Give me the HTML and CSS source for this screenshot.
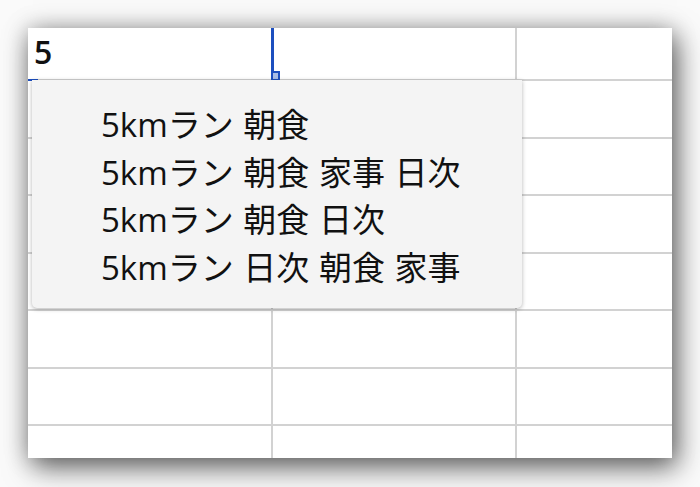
FILE: index.html
```html
<!DOCTYPE html>
<html lang="ja">
<head>
<meta charset="utf-8">
<link rel="stylesheet" href="styles.css">
</head>
<body>
<div class="sheet">
  <div class="grid">
    <div class="cell active-cell">5</div><div class="cell"></div><div class="cell"></div>
    <div class="cell"></div><div class="cell"></div><div class="cell"></div>
    <div class="cell"></div><div class="cell"></div><div class="cell"></div>
    <div class="cell"></div><div class="cell"></div><div class="cell"></div>
    <div class="cell"></div><div class="cell"></div><div class="cell"></div>
    <div class="cell"></div><div class="cell"></div><div class="cell"></div>
    <div class="cell"></div><div class="cell"></div><div class="cell"></div>
    <div class="cell"></div><div class="cell"></div><div class="cell"></div>
  </div>
  <div class="sel-right"></div>
  <div class="sel-handle"></div>
  <div class="sel-left"></div>
  <ul class="dropdown">
    <li>5kmラン 朝食</li>
    <li>5kmラン 朝食 家事 日次</li>
    <li>5kmラン 朝食 日次</li>
    <li>5kmラン 日次 朝食 家事</li>
  </ul>
</div>
</body>
</html>
```
FILE: styles.css
```css
html, body {
  margin: 0;
  padding: 0;
}
body {
  background: #fafafa;
  width: 700px;
  height: 487px;
  padding: 28px;
  box-sizing: border-box;
  overflow: hidden;
  font-family: "Open Sans", "Noto Sans CJK JP", sans-serif;
}
.sheet {
  position: relative;
  width: 644px;
  height: 430px;
  overflow: hidden;
  background: #fff;
  box-shadow: 5px 10px 26px rgba(0, 0, 0, 0.55), 0 0 22px rgba(0, 0, 0, 0.25);
}
.grid {
  display: grid;
  grid-template-columns: 243px 242px 157px;
  grid-template-rows: 51px repeat(7, 55.5px);
  column-gap: 2px;
  row-gap: 2px;
  background: #d2d2d2;
}
.cell {
  background: #fff;
}
.active-cell {
  font-size: 32px;
  font-weight: 600;
  line-height: 40px;
  padding: 4px 0 0 6px;
  color: #111;
}
.sel-right {
  position: absolute;
  left: 243px;
  top: 0;
  width: 3px;
  height: 45px;
  background: #1d4fbf;
}
.sel-handle {
  position: absolute;
  left: 243px;
  top: 43px;
  width: 5px;
  height: 6px;
  border: 2px solid #1d4fbf;
  background: #a9bde6;
}
.sel-left {
  position: absolute;
  left: 0;
  top: 51px;
  width: 10px;
  height: 2px;
  background: #1d4fbf;
}
.dropdown {
  position: absolute;
  left: 4px;
  top: 52px;
  width: 490px;
  height: 228px;
  margin: 0;
  padding: 21px 0 0 69px;
  box-sizing: border-box;
  list-style: none;
  background: #f4f4f4;
  border-radius: 0 0 5px 5px;
  box-shadow: 0 1px 4px rgba(0, 0, 0, 0.3);
  font-size: 33px;
  font-weight: 400;
  line-height: 47.5px;
  word-spacing: 1px;
  color: #111;
}
.dropdown li {
  white-space: nowrap;
}
```
